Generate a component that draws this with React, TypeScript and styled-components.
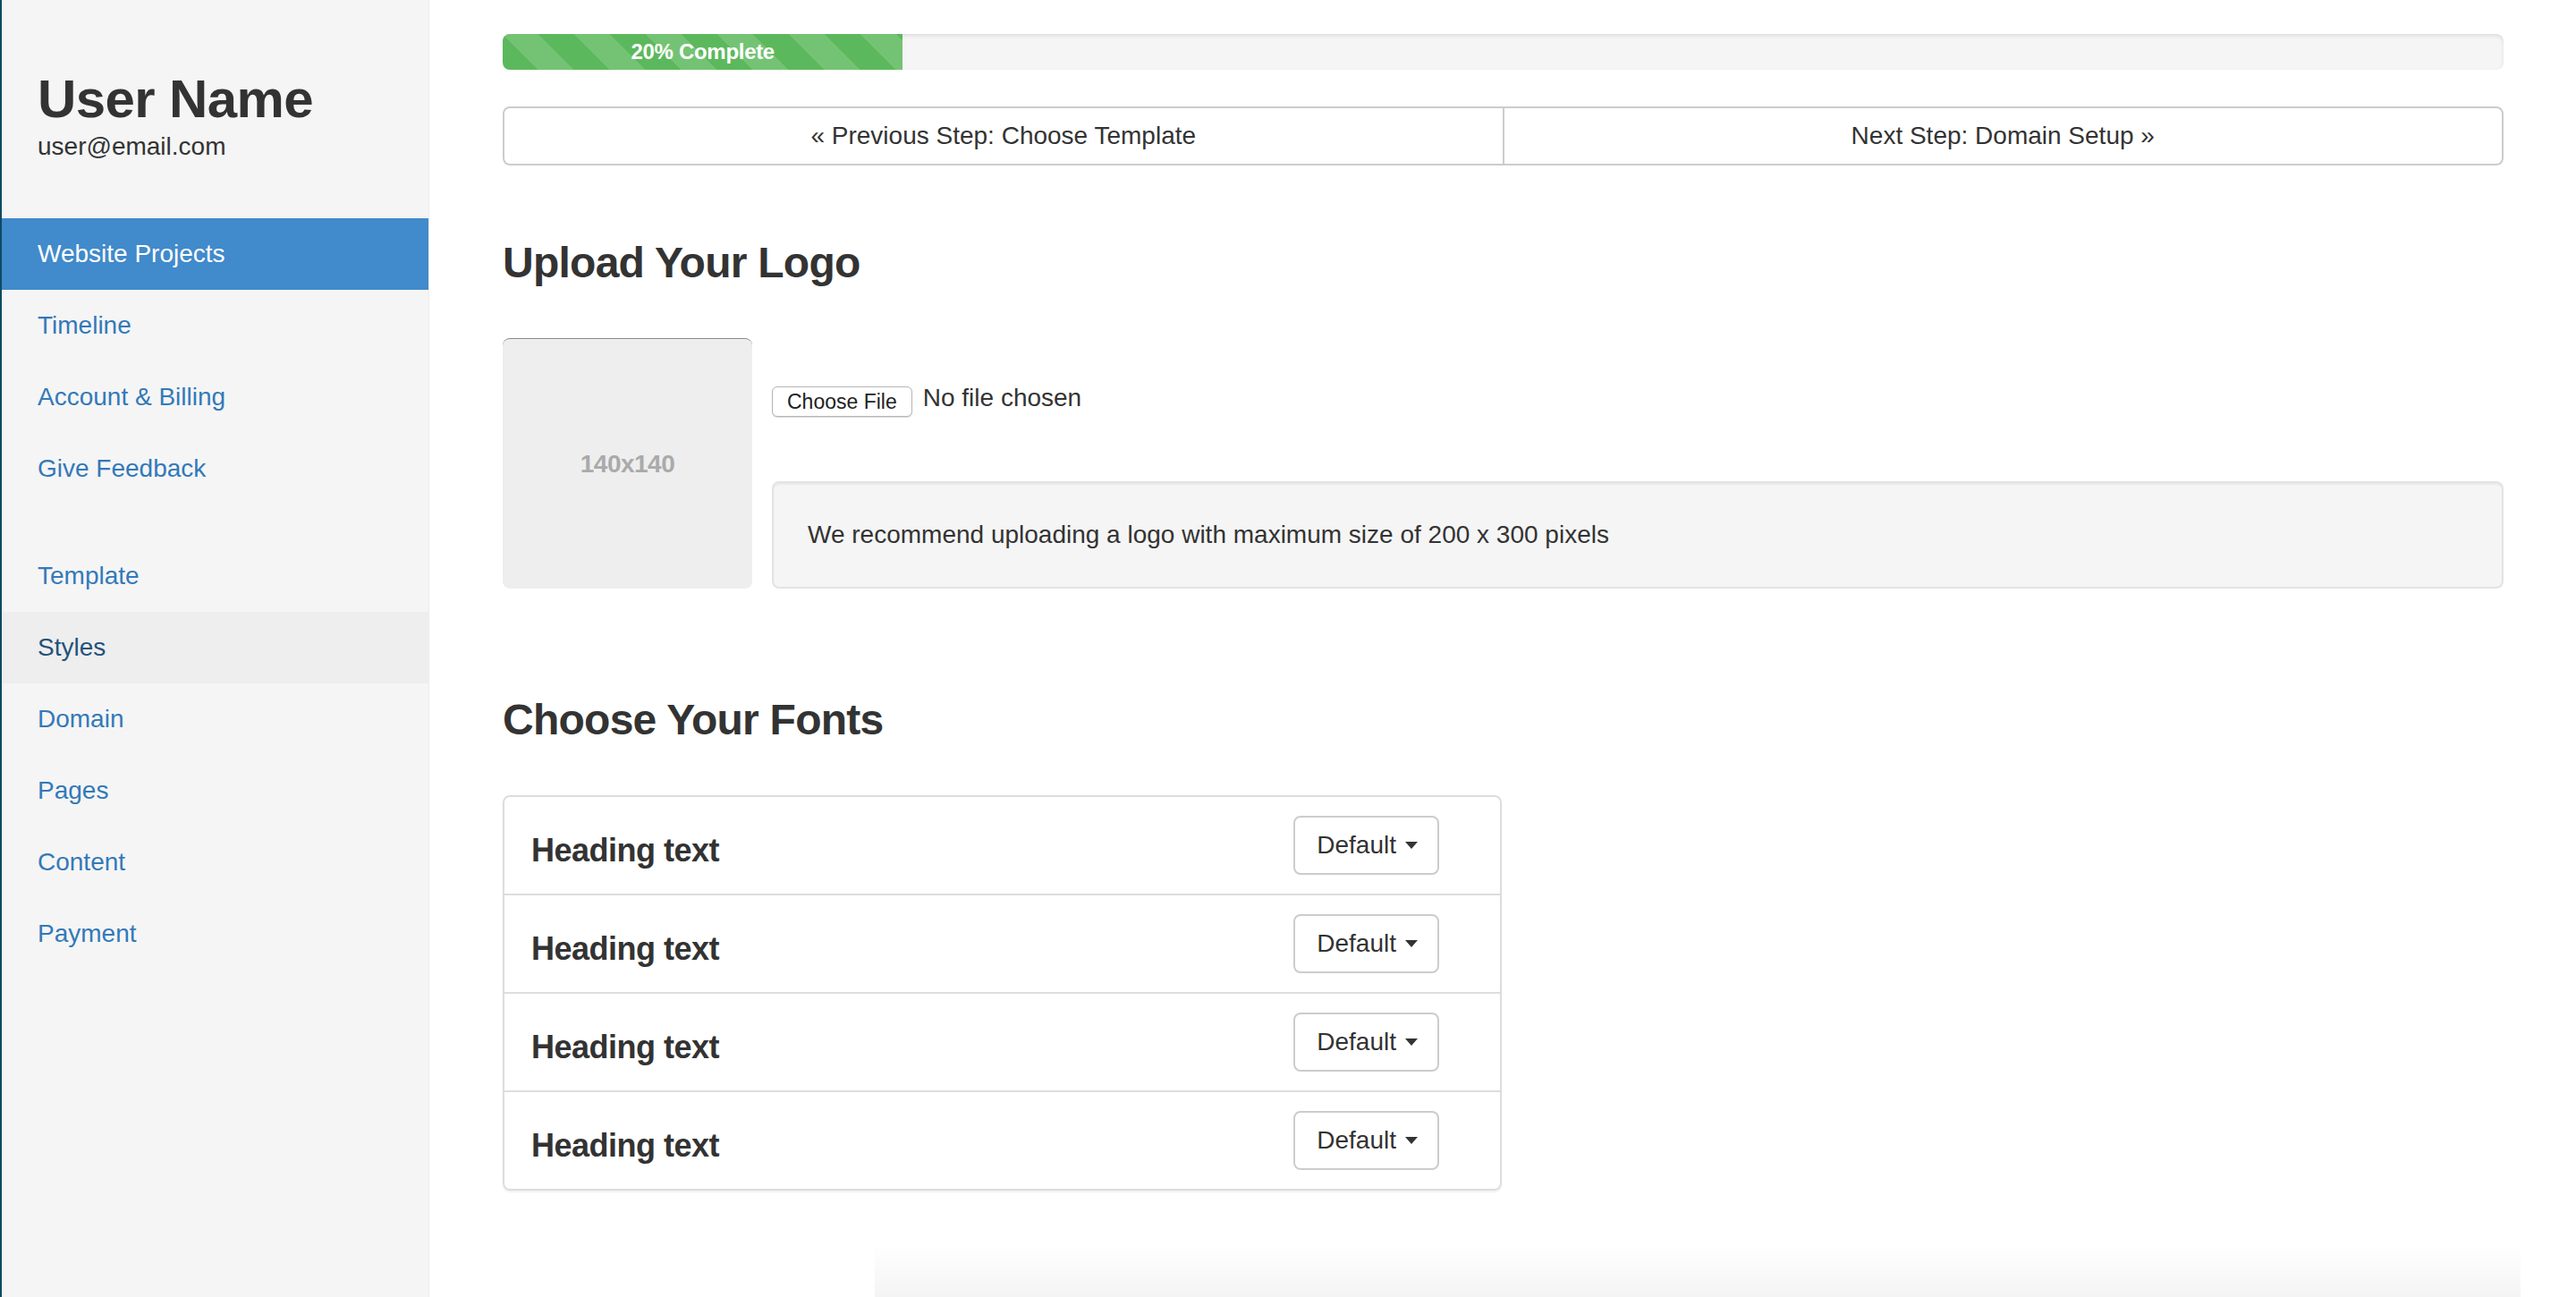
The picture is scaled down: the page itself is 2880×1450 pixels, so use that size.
import React from "react";
import styled, { createGlobalStyle, css } from "styled-components";

const GlobalStyle = createGlobalStyle`
  html, body {
    margin: 0;
    padding: 0;
    background: #fff;
  }
  body {
    font-family: "Liberation Sans", Arial, sans-serif;
    font-size: 28px;
    line-height: 40px;
    color: #333;
  }
  * {
    box-sizing: border-box;
  }
`;

const Layout = styled.div`
  display: flex;
  width: 2880px;
  height: 1450px;
  overflow: hidden;
`;

const Sidebar = styled.aside`
  width: 480px;
  flex-shrink: 0;
  background: #f5f5f5;
  border-left: 2px solid #0b4a63;
  border-right: 1px solid #ececec;
`;

const Profile = styled.div`
  padding: 78px 0 0 40px;
`;

const UserName = styled.h2`
  margin: 0;
  font-size: 60px;
  line-height: 66px;
  font-weight: 700;
  letter-spacing: -0.6px;
  color: #333;
`;

const Email = styled.div`
  font-size: 28px;
  line-height: 40px;
  color: #333;
`;

const Nav = styled.nav`
  margin-top: 60px;
  display: flex;
  flex-direction: column;
`;

const NavGroup = styled.div`
  display: flex;
  flex-direction: column;
  & + & {
    margin-top: 40px;
  }
`;

const NavItem = styled.a<{ $state?: "active" | "hover" }>`
  display: block;
  height: 80px;
  line-height: 80px;
  padding-left: 40px;
  font-size: 28px;
  color: #3379b9;
  text-decoration: none;
  ${(p) =>
    p.$state === "active" &&
    css`
      background: #418acb;
      color: #fff;
    `}
  ${(p) =>
    p.$state === "hover" &&
    css`
      background: #eee;
      color: #23527c;
    `}
`;

const Main = styled.main`
  flex: 1;
  padding: 38px 81px 0 82px;
  background:
    linear-gradient(to bottom, rgba(0, 0, 0, 0) 1390px, rgba(0, 0, 0, 0.045) 1450px)
      no-repeat 498px 0 / calc(100% - 560px) 100%;
`;

const Progress = styled.div`
  height: 40px;
  background: #f5f5f5;
  border-radius: 8px;
  box-shadow: inset 0 2px 4px rgba(0, 0, 0, 0.1);
  overflow: hidden;
  margin-bottom: 41px;
`;

const ProgressBar = styled.div`
  height: 100%;
  background-color: #5cb85c;
  background-image: linear-gradient(
    45deg,
    rgba(255, 255, 255, 0.15) 25%,
    transparent 25%,
    transparent 50%,
    rgba(255, 255, 255, 0.15) 50%,
    rgba(255, 255, 255, 0.15) 75%,
    transparent 75%,
    transparent
  );
  background-size: 80px 80px;
  color: #fff;
  font-size: 24px;
  font-weight: 700;
  letter-spacing: -0.3px;
  line-height: 40px;
  text-align: center;
`;

const Pager = styled.div`
  display: flex;
`;

const PagerButton = styled.button<{ $side: "left" | "right" }>`
  flex: 1;
  height: 66px;
  background: #fff;
  border: 2px solid #ccc;
  font-family: inherit;
  font-size: 28px;
  color: #333;
  cursor: pointer;
  border-radius: ${(p) => (p.$side === "left" ? "8px 0 0 8px" : "0 8px 8px 0")};
  margin-left: ${(p) => (p.$side === "right" ? "-2px" : "0")};
`;

const SectionTitle = styled.h3<{ $top: number; $bottom: number }>`
  margin: ${(p) => p.$top}px 0 ${(p) => p.$bottom}px;
  font-size: 48px;
  line-height: 53px;
  font-weight: 700;
  letter-spacing: -0.75px;
  color: #333;
`;

const LogoRow = styled.div`
  display: flex;
  gap: 22px;
`;

const Thumbnail = styled.div`
  width: 279px;
  height: 280px;
  flex-shrink: 0;
  background: #eee;
  border-top: 1px solid #8c8c8c;
  border-radius: 8px;
  display: flex;
  align-items: center;
  justify-content: center;
  color: #aaa;
  font-size: 28px;
  font-weight: 700;
  letter-spacing: -0.5px;
`;

const UploadColumn = styled.div`
  flex: 1;
  display: flex;
  flex-direction: column;
`;

const FileRow = styled.div`
  margin-top: 54px;
  height: 34px;
  display: flex;
  align-items: center;
  gap: 12px;
`;

const FileButton = styled.button`
  height: 34px;
  padding: 0 16px;
  background: #fff;
  border: 1px solid #b5b5b5;
  border-radius: 6px;
  box-shadow: 0 1px 1px rgba(0, 0, 0, 0.15);
  font-family: "Liberation Sans", Arial, sans-serif;
  font-size: 23px;
  color: #222;
`;

const FileName = styled.span`
  font-size: 28px;
  line-height: 34px;
  margin-bottom: 8px;
`;

const Well = styled.div`
  margin-top: 72px;
  padding: 38px;
  background: #f5f5f5;
  border: 2px solid #e3e3e3;
  border-radius: 8px;
  box-shadow: inset 0 2px 2px rgba(0, 0, 0, 0.05);
  font-size: 28px;
  line-height: 40px;
`;

const FontTable = styled.div`
  width: 1117px;
  border: 2px solid #ddd;
  border-radius: 8px;
  box-shadow: 0 2px 2px rgba(0, 0, 0, 0.06);
`;

const FontRow = styled.div`
  height: 108px;
  display: flex;
  align-items: center;
  justify-content: space-between;
  padding: 0 68px 0 30px;
  & + & {
    height: 110px;
    border-top: 2px solid #ddd;
  }
`;

const FontHeading = styled.h4`
  margin: 11px 0 0;
  font-size: 36px;
  line-height: 40px;
  font-weight: 700;
  letter-spacing: -0.5px;
  color: #333;
`;

const DropdownButton = styled.button`
  height: 66px;
  display: flex;
  align-items: center;
  padding: 0 22px 0 24px;
  background: #fff;
  border: 2px solid #ccc;
  border-radius: 8px;
  font-family: inherit;
  font-size: 28px;
  color: #333;
`;

const Caret = styled.span`
  display: inline-block;
  width: 0;
  height: 0;
  margin-left: 10px;
  border-top: 8px solid #333;
  border-left: 7px solid transparent;
  border-right: 7px solid transparent;
`;

const primaryNav = ["Website Projects", "Timeline", "Account & Billing", "Give Feedback"];
const stepNav = ["Template", "Styles", "Domain", "Pages", "Content", "Payment"];

export default function App() {
  const progress = 20;
  return (
    <>
      <GlobalStyle />
      <Layout>
        <Sidebar>
          <Profile>
            <UserName>User Name</UserName>
            <Email>user@email.com</Email>
          </Profile>
          <Nav>
            <NavGroup>
              {primaryNav.map((item) => (
                <NavItem key={item} href="#" $state={item === "Website Projects" ? "active" : undefined}>
                  {item}
                </NavItem>
              ))}
            </NavGroup>
            <NavGroup>
              {stepNav.map((item) => (
                <NavItem key={item} href="#" $state={item === "Styles" ? "hover" : undefined}>
                  {item}
                </NavItem>
              ))}
            </NavGroup>
          </Nav>
        </Sidebar>

        <Main>
          <Progress>
            <ProgressBar style={{ width: `${progress}%` }}>{progress}% Complete</ProgressBar>
          </Progress>

          <Pager>
            <PagerButton $side="left">« Previous Step: Choose Template</PagerButton>
            <PagerButton $side="right">Next Step: Domain Setup »</PagerButton>
          </Pager>

          <SectionTitle $top={82} $bottom={58}>
            Upload Your Logo
          </SectionTitle>
          <LogoRow>
            <Thumbnail>140x140</Thumbnail>
            <UploadColumn>
              <FileRow>
                <FileButton>Choose File</FileButton>
                <FileName>No file chosen</FileName>
              </FileRow>
              <Well>We recommend uploading a logo with maximum size of 200 x 300 pixels</Well>
            </UploadColumn>
          </LogoRow>

          <SectionTitle $top={120} $bottom={58}>
            Choose Your Fonts
          </SectionTitle>
          <FontTable>
            {[0, 1, 2, 3].map((i) => (
              <FontRow key={i}>
                <FontHeading>Heading text</FontHeading>
                <DropdownButton>
                  Default
                  <Caret />
                </DropdownButton>
              </FontRow>
            ))}
          </FontTable>
        </Main>
      </Layout>
    </>
  );
}
